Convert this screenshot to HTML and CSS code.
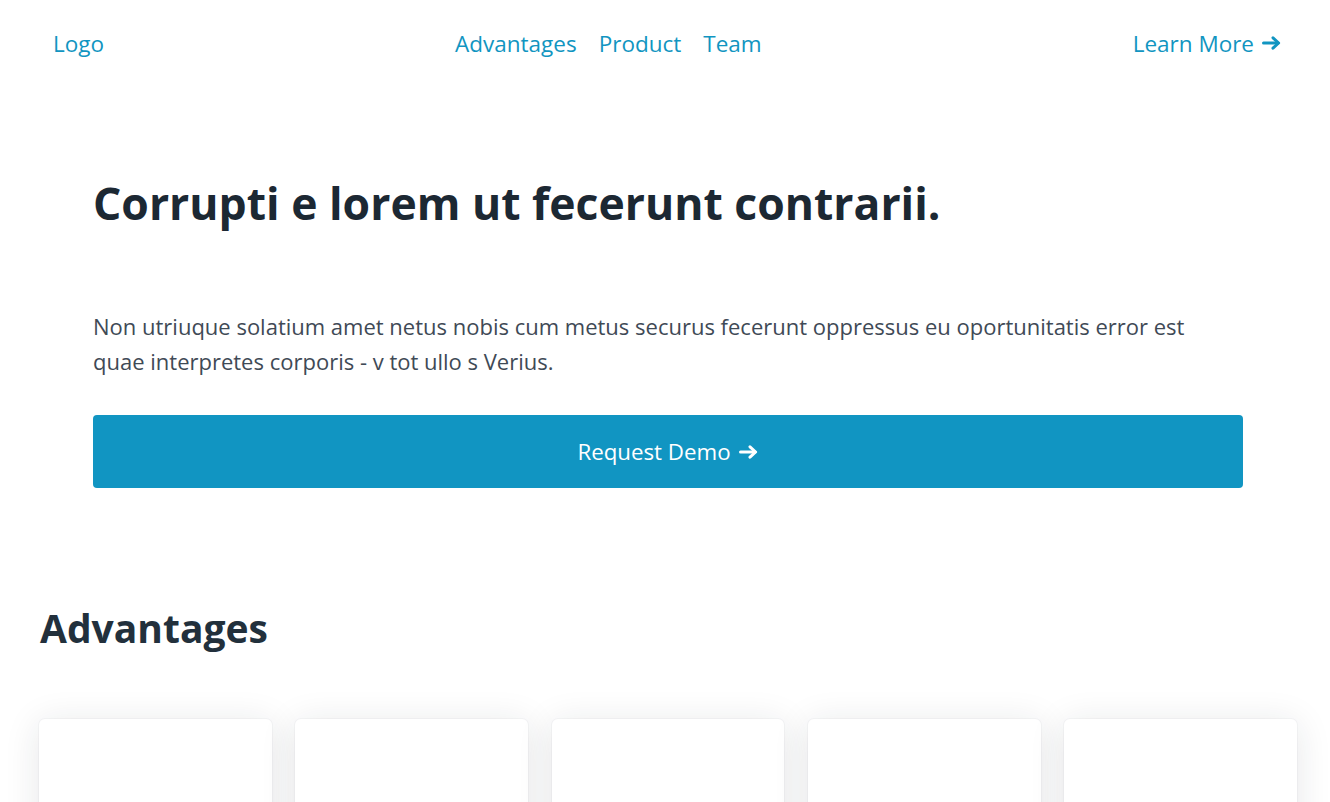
FILE: index.html
```html
<!DOCTYPE html>
<html lang="en">
<head>
<meta charset="utf-8">
<title>Landing</title>
<link rel="stylesheet" href="styles.css">
</head>
<body>
<header class="nav">
  <a class="nav-logo" href="#">Logo</a>
  <nav class="nav-links">
    <a href="#">Advantages</a>
    <a href="#">Product</a>
    <a href="#">Team</a>
  </nav>
  <a class="nav-cta" href="#">Learn More <svg class="arrow" viewBox="0 0 20 14" aria-hidden="true"><path d="M1.5 7 H16" /><path d="M11 1.8 L16.6 7 L11 12.2" /></svg></a>
</header>

<main>
  <section class="hero">
    <h1 class="hero-title">Corrupti e lorem ut fecerunt contrarii.</h1>
    <p class="hero-text">Non utriuque solatium amet netus nobis cum metus securus fecerunt oppressus eu oportunitatis error est quae interpretes corporis - v tot ullo s Verius.</p>
    <a class="hero-button" href="#">Request Demo <svg class="arrow" viewBox="0 0 20 14" aria-hidden="true"><path d="M1.5 7 H16" /><path d="M11 1.8 L16.6 7 L11 12.2" /></svg></a>
  </section>

  <section class="advantages">
    <h2 class="section-title">Advantages</h2>
    <div class="cards">
      <div class="card"></div>
      <div class="card"></div>
      <div class="card"></div>
      <div class="card"></div>
      <div class="card"></div>
    </div>
  </section>
</main>
</body>
</html>
```

FILE: styles.css
```css
* { box-sizing: border-box; }

html, body {
  margin: 0;
  padding: 0;
  background: #ffffff;
  overflow: hidden;
}

body {
  font-family: "Open Sans", "Noto Sans", sans-serif;
  color: #1d2935;
}

a { text-decoration: none; color: #1195c1; }

.arrow {
  width: 20px;
  height: 14px;
  fill: none;
  stroke: currentColor;
  stroke-width: 3;
  stroke-linecap: round;
  stroke-linejoin: round;
  flex: 0 0 auto;
}

/* ---------- nav ---------- */
.nav {
  display: flex;
  align-items: center;
  height: 86px;
  padding: 0 48px 0 53px;
  font-size: 22.5px;
}

.nav-logo { flex: 0 0 auto; }

.nav-links {
  display: flex;
  gap: 22px;
  margin-left: 351px;
}

.nav-cta {
  margin-left: auto;
  display: flex;
  align-items: center;
  gap: 8px;
}

/* ---------- hero ---------- */
.hero {
  padding: 0 87px 0 93px;
  display: flex;
  flex-direction: column;
  align-items: stretch;
}

.hero-title {
  margin: 90px 0 0;
  font-size: 44.5px;
  line-height: 1.2;
  font-weight: 700;
  color: #1c2833;
}

.hero-text {
  margin: 80px 0 0;
  max-width: 1110px;
  font-size: 22px;
  line-height: 35px;
  color: #3f4a56;
}

.hero-button {
  margin-top: 36px;
  height: 73px;
  display: flex;
  align-items: center;
  justify-content: center;
  gap: 8px;
  background: #1195c2;
  color: #ffffff;
  border-radius: 4px;
  font-size: 22.3px;
}

/* ---------- advantages ---------- */
.advantages {
  padding: 0 33px 0 39px;
}

.section-title {
  margin: 117px 0 0 1px;
  font-size: 39px;
  line-height: 1.2;
  font-weight: 700;
  color: #22303c;
}

.cards {
  margin-top: 67px;
  display: grid;
  grid-template-columns: repeat(5, 1fr);
  gap: 23.5px;
}

.card {
  height: 300px;
  background: #ffffff;
  border-radius: 6px;
  box-shadow: 0 0 0 1px rgba(30, 40, 50, 0.03), 0 4px 36px rgba(30, 40, 50, 0.11);
}
```
